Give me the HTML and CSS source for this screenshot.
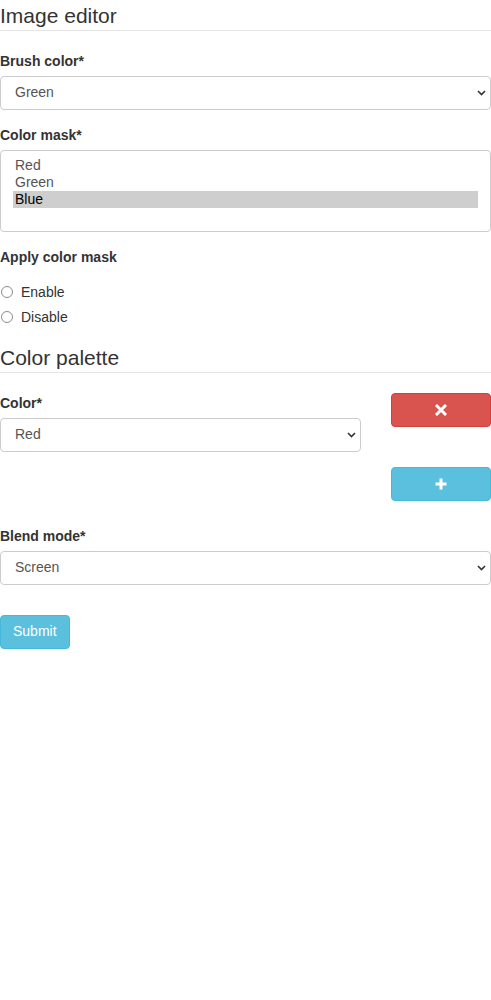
FILE: index.html
```html
<!DOCTYPE html>
<html>
<head>
<meta charset="utf-8">
<link rel="stylesheet" href="styles.css">
</head>
<body>
<form class="form">
  <fieldset class="fs">
    <legend class="legend">Image editor</legend>
    <div class="group">
      <label class="label">Brush color*</label>
      <select class="control">
        <option>Red</option>
        <option selected>Green</option>
        <option>Blue</option>
      </select>
    </div>
    <div class="group">
      <label class="label">Color mask*</label>
      <select class="control multi" multiple size="4">
        <option>Red</option>
        <option>Green</option>
        <option selected>Blue</option>
      </select>
    </div>
    <div class="group">
      <label class="label">Apply color mask</label>
      <div class="radios">
        <label class="radio"><input type="radio" name="mask" class="radio-input"><span>Enable</span></label>
        <label class="radio"><input type="radio" name="mask" class="radio-input"><span>Disable</span></label>
      </div>
    </div>
  </fieldset>
  <fieldset class="fs">
    <legend class="legend">Color palette</legend>
    <div class="palette-row">
      <div class="group">
        <label class="label">Color*</label>
        <select class="control">
          <option selected>Red</option>
          <option>Green</option>
          <option>Blue</option>
        </select>
      </div>
      <div class="btn-col">
        <button type="button" class="btn btn-danger btn-block">
          <svg class="ico" width="12" height="12" viewBox="0 0 12 12"><path d="M2 2 L10 10 M10 2 L2 10" stroke="#fff" stroke-width="3" stroke-linecap="square" fill="none"/></svg>
        </button>
      </div>
    </div>
    <div class="add-row">
      <button type="button" class="btn btn-info add-btn">
        <svg class="ico" width="12" height="12" viewBox="0 0 12 12"><path d="M6 0.5 V11.5 M0.5 6 H11.5" stroke="#fff" stroke-width="3" fill="none"/></svg>
      </button>
    </div>
    <div class="group">
      <label class="label">Blend mode*</label>
      <select class="control">
        <option>Normal</option>
        <option>Multiply</option>
        <option selected>Screen</option>
      </select>
    </div>
  </fieldset>
  <div class="submit-row">
    <button type="submit" class="btn btn-info">Submit</button>
  </div>
</form>
</body>
</html>
```
FILE: styles.css
```css
* { box-sizing: border-box; }
html, body { margin: 0; padding: 0; background: #fff; }
body {
  font-family: "Liberation Sans", Arial, sans-serif;
  font-size: 14px;
  line-height: 1.42857;
  color: #333;
  width: 491px;
}
.form { margin: 0; }
.fs { border: 0; margin: 0; padding: 0; min-width: 0; }
.legend {
  display: block;
  width: 100%;
  padding: 0;
  margin: 0 0 20px;
  font-size: 21px;
  line-height: 31px;
  color: #333;
  border-bottom: 1px solid #e5e5e5;
  height: 31px;
}
.group { margin-bottom: 15px; }
.label {
  display: block;
  font-weight: bold;
  margin-bottom: 5px;
  line-height: 20px;
}
.control {
  display: block;
  width: 100%;
  height: 34px;
  padding: 6px 12px 6px 14px;
  font-family: "Liberation Sans", Arial, sans-serif;
  font-size: 14px;
  line-height: 1.42857;
  color: #555;
  background-color: #fff;
  border: 1px solid #ccc;
  border-radius: 4px;
  -webkit-appearance: none;
  appearance: none;
  background-image: url("data:image/svg+xml;utf8,<svg xmlns='http://www.w3.org/2000/svg' width='9' height='6' viewBox='0 0 9 6'><path d='M1 1 L4.5 4.5 L8 1' stroke='%23333' stroke-width='1.6' fill='none'/></svg>");
  background-repeat: no-repeat;
  background-position: right 4px center;
}
.control.multi {
  height: 82px;
  background-image: none;
  padding: 6px 12px;
  overflow: hidden;
}
.control.multi option {
  padding: 0 2px;
  height: 17px;
  line-height: 17px;
  color: #555;
}
.control.multi option:checked {
  background: #cecece linear-gradient(#cecece, #cecece);
  color: #000;
}
.radios { margin-top: 15px; }
.radio {
  display: flex;
  align-items: center;
  min-height: 20px;
  line-height: 20px;
  font-weight: normal;
  cursor: pointer;
}
.radio + .radio { margin-top: 5px; }
.radio-input {
  -webkit-appearance: none;
  appearance: none;
  width: 12px;
  height: 12px;
  margin: 0 8px 0 1px;
  border: 1px solid #8c8c8c;
  border-radius: 50%;
  background: #fff;
  flex: none;
}
.palette-row {
  display: grid;
  grid-template-columns: 1fr 100px;
  column-gap: 30px;
}
.add-row {
  display: flex;
  justify-content: flex-end;
  margin-bottom: 25px;
}
.btn {
  display: inline-flex;
  align-items: center;
  justify-content: center;
  height: 34px;
  padding: 6px 12px;
  font-family: "Liberation Sans", Arial, sans-serif;
  font-size: 14px;
  line-height: 1.42857;
  border: 1px solid transparent;
  border-radius: 4px;
  color: #fff;
  cursor: pointer;
}
.btn-block { width: 100%; display: flex; }
.add-btn { width: 100px; }
.btn-danger { background-color: #d9534f; border-color: #d43f3a; }
.btn-info { background-color: #5bc0de; border-color: #46b8da; }
.ico { display: block; }
.submit-row { margin-top: 15px; }
```
